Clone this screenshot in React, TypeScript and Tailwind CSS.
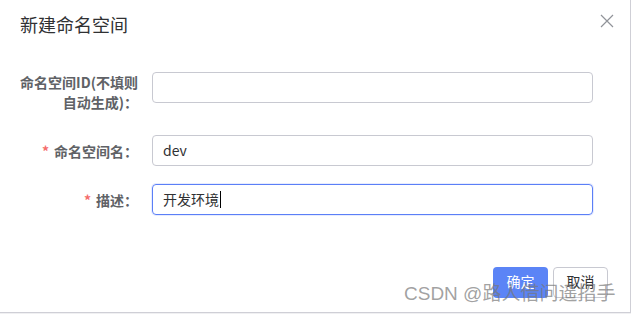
const font = { fontFamily: '"Noto Sans CJK SC", "Noto Sans", sans-serif' };

function Label({ required, children }: { required?: boolean; children: React.ReactNode }) {
  return (
    <div className="w-[138px] shrink-0 text-right text-[14px] font-bold leading-[20px] text-[#606266]">
      {required && <span className="mr-[5px] text-[#f56c6c]">*</span>}
      {children}
    </div>
  );
}

export default function App() {
  return (
    <div className="relative h-[314px] w-[631px] overflow-hidden bg-[#f0f0f2]" style={font}>
      <div className="h-[313px] w-[631px] border-b border-r border-[#cfcfd6] bg-white">
        <div className="flex items-start justify-between pl-5 pr-[16px] pt-[12px]">
          <span className="text-[18px] leading-[24px] text-[#303133]">新建命名空间</span>
          <svg width="14" height="14" viewBox="0 0 14 14" className="mt-[2px]">
            <path d="M1 1 L13 13 M13 1 L1 13" stroke="#909399" strokeWidth="1.2" />
          </svg>
        </div>

        <div className="mt-[36px] flex items-start">
          <Label>
            命名空间ID(不填则
            <br />
            自动生成)：
          </Label>
          <div className="ml-[14px] h-[31px] w-[441px] rounded-[4px] border border-[#c8c9d1]" />
        </div>

        <div className="mt-[23px] flex items-center">
          <Label required>命名空间名：</Label>
          <div className="ml-[14px] flex h-[31px] w-[441px] items-center rounded-[4px] border border-[#c8c9d1] px-[10px] text-[14px] text-[#303133]">
            dev
          </div>
        </div>

        <div className="mt-[18px] flex items-center">
          <Label required>描述：</Label>
          <div className="ml-[14px] flex h-[31px] w-[441px] items-center rounded-[4px] border border-[#5b7ff7] px-[10px] text-[14px] text-[#303133] shadow-[0_0_0_1px_rgba(91,127,247,0.15)]">
            开发环境
            <span className="ml-[1px] inline-block h-[17px] w-[1px] bg-black" />
          </div>
        </div>

        <div className="mt-[52px] flex justify-end gap-[5px] pr-[22px]">
          <button className="h-[31px] w-[55px] rounded-[4px] bg-[#5b84f6] pb-[3px] text-[14px] text-white" type="button">
            确定
          </button>
          <button className="h-[31px] w-[55px] rounded-[4px] border border-[#c8c9d1] bg-white pb-[3px] text-[14px] text-[#303133]" type="button">
            取消
          </button>
        </div>
      </div>

      <div className="pointer-events-none absolute left-[404px] top-[280px] whitespace-nowrap text-[19px] leading-[24px] text-[rgba(120,120,120,0.7)]">
        <span style={{ fontFamily: '"Liberation Sans", sans-serif' }}>CSDN @</span>
        <span>路人借问遥招手</span>
      </div>
    </div>
  );
}
